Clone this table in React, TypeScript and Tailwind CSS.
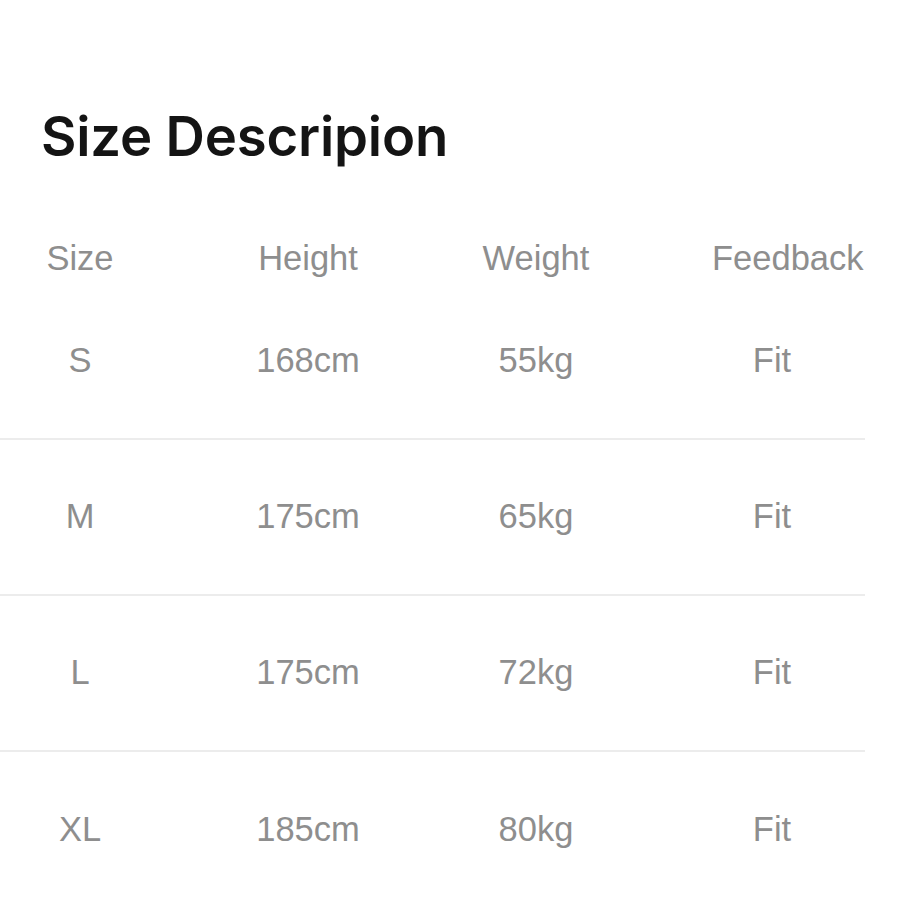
type Row = {
  size: string
  height: string
  weight: string
  feedback: string
}

const rows: Row[] = [
  { size: "S", height: "168cm", weight: "55kg", feedback: "Fit" },
  { size: "M", height: "175cm", weight: "65kg", feedback: "Fit" },
  { size: "L", height: "175cm", weight: "72kg", feedback: "Fit" },
  { size: "XL", height: "185cm", weight: "80kg", feedback: "Fit" },
]

const colClass = [
  "w-[120px] text-center",
  "w-[120px] text-center",
  "w-[120px] text-center",
  "w-[120px] text-center ml-2",
]

function Cells({ values }: { values: string[] }) {
  return (
    <div className="flex items-center gap-[108px] pl-5">
      {values.map((v, i) => (
        <div key={i} className={colClass[i]}>
          {v}
        </div>
      ))}
    </div>
  )
}

export default function App() {
  return (
    <div className="w-[920px] h-[920px] overflow-hidden bg-white pt-[109px]">
      <h1 className="pl-[41px] text-[54.5px] leading-[54px] font-semibold text-[#141414] font-['Inter',sans-serif] tracking-[-0.2px]">
        Size Descripion
      </h1>

      <div className="mt-[71px] w-[865px] text-[34.5px] text-[#8e8e8e] font-['Liberation_Sans',Arial,sans-serif]">
        <div className="h-[50px] flex items-center">
          <Cells values={["Size", "Height", "Weight", "Feedback"]} />
        </div>
        {rows.map((row, i) => (
          <div
            key={row.size}
            className={
              i < rows.length - 1
                ? "h-[156px] flex items-center border-b-2 border-[#ececec]"
                : "h-[156px] flex items-center"
            }
          >
            <Cells values={[row.size, row.height, row.weight, row.feedback]} />
          </div>
        ))}
      </div>
    </div>
  )
}
